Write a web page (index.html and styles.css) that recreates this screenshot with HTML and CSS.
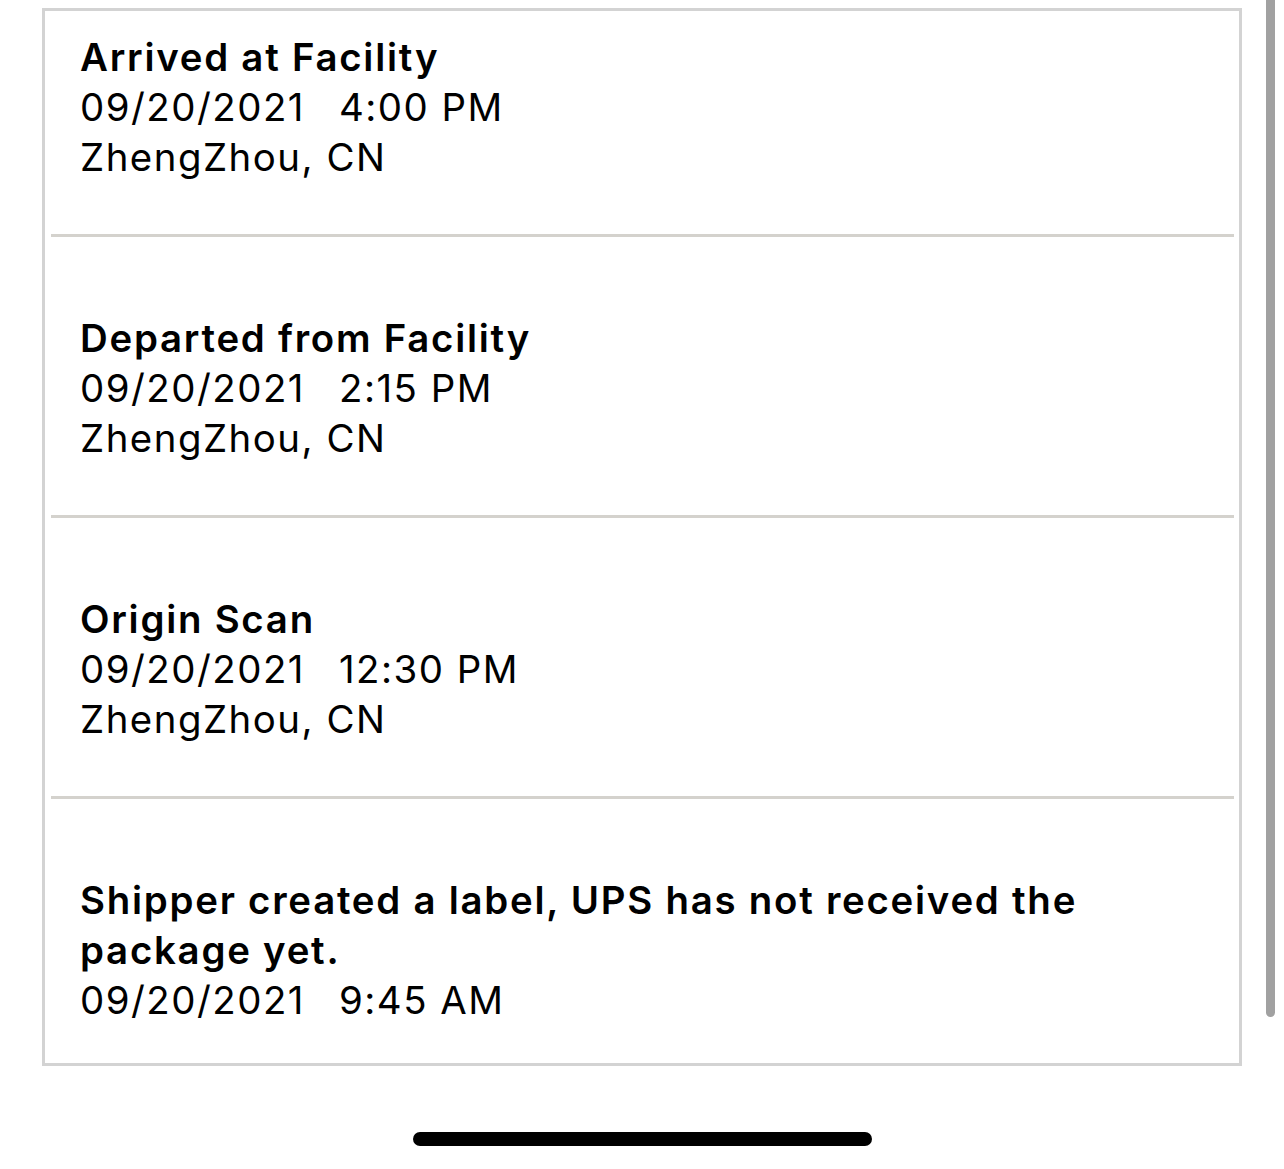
FILE: index.html
```html
<!DOCTYPE html>
<html lang="en">
<head>
<meta charset="utf-8">
<title>Tracking history</title>
<link rel="stylesheet" href="styles.css">
</head>
<body>
<main class="screen">
  <section class="card">
    <div class="item item-first">
      <div class="title">Arrived at Facility</div>
      <div class="line"><span>09/20/2021</span><span class="time">4:00 PM</span></div>
      <div class="line">ZhengZhou, CN</div>
    </div>
    <div class="item">
      <div class="title">Departed from Facility</div>
      <div class="line"><span>09/20/2021</span><span class="time">2:15 PM</span></div>
      <div class="line">ZhengZhou, CN</div>
    </div>
    <div class="item">
      <div class="title">Origin Scan</div>
      <div class="line"><span>09/20/2021</span><span class="time">12:30 PM</span></div>
      <div class="line">ZhengZhou, CN</div>
    </div>
    <div class="item item-last">
      <div class="title title-wrap">Shipper created a label, UPS has not received the package yet.</div>
      <div class="line"><span>09/20/2021</span><span class="time">9:45 AM</span></div>
    </div>
  </section>
  <div class="scrollbar"></div>
  <div class="home-indicator"></div>
</main>
</body>
</html>
```
FILE: styles.css
```css
html, body {
  margin: 0;
  padding: 0;
  background: #ffffff;
}

body {
  font-family: Inter, "Noto Sans", "Liberation Sans", sans-serif;
  color: #000000;
}

.screen {
  position: relative;
  width: 1284px;
  height: 1169px;
  overflow: hidden;
  padding-top: 8px;
  box-sizing: border-box;
}

.card {
  margin-left: 42px;
  width: 1200px;
  box-sizing: border-box;
  border: 3px solid #d3d3d3;
  padding: 0 5px 0 6px;
}

.item {
  padding: 76px 0 52px 29px;
  border-bottom: 3px solid #d4d2cd;
}

.item-first {
  padding-top: 21px;
}

.item-last {
  border-bottom: none;
  padding-bottom: 38px;
}

.title {
  font-size: 38.4px;
  line-height: 50px;
  font-weight: 600;
  letter-spacing: 1.75px;
}

.title-wrap {
  max-width: 1030px;
}

.line {
  font-size: 38.4px;
  line-height: 50px;
  font-weight: 400;
  letter-spacing: 1.5px;
}

.time {
  margin-left: 34px;
}

.scrollbar {
  position: absolute;
  left: 1266px;
  top: -10px;
  width: 9px;
  height: 1027px;
  border-radius: 5px;
  background: #a1a1a1;
}

.home-indicator {
  position: absolute;
  left: 413px;
  top: 1132px;
  width: 459px;
  height: 14px;
  border-radius: 7px;
  background: #000000;
}
```
